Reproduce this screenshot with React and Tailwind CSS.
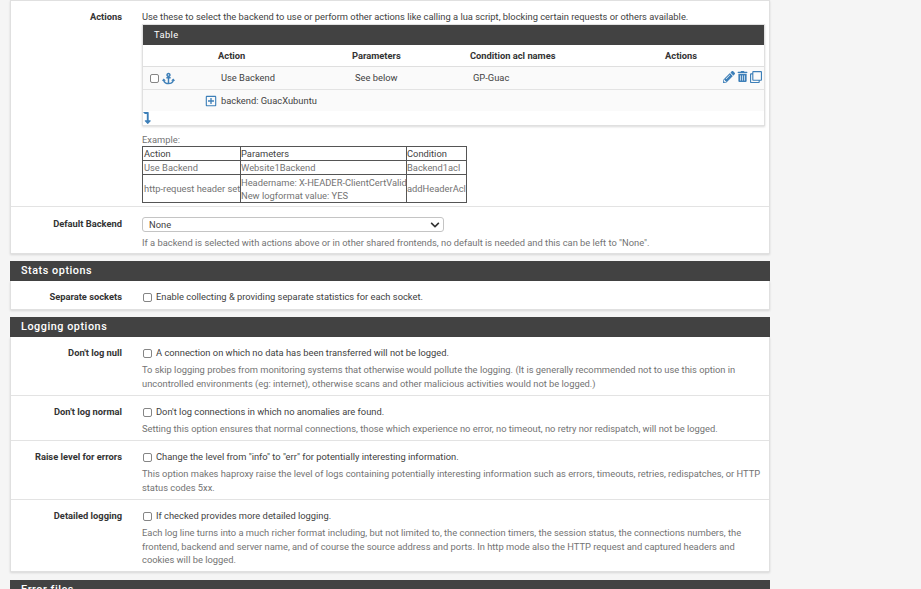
import { FaAnchor, FaPencilAlt, FaTrashAlt, FaRegClone, FaRegPlusSquare, FaLevelDownAlt, FaChevronDown } from "react-icons/fa";

const Check = () => (
  <span className="inline-block ml-[1px] w-[9px] h-[9px] shrink-0 bg-white border border-[#858585] rounded-[2px]" />
);

const SectionHead = ({ title }) => (
  <div className="h-[20px] bg-[#424242] text-white text-[10.8px] font-medium tracking-[0.55px] pl-[11px] pt-[3px] leading-[14px]">
    {title}
  </div>
);

const Row = ({ label, children, last, className = "" }) => (
  <div className={`flex ${last ? "" : "border-b border-[#e3e3e3]"} ${className}`}>
    <div className="w-[111px] shrink-0 text-right text-[9.33px] font-bold text-[#333] leading-[14px]">{label}</div>
    <div className="ml-[20px] w-[623px]">{children}</div>
  </div>
);

const CheckLine = ({ children }) => (
  <div className="flex items-center h-[14px] text-[9.33px] text-[#424242] leading-[14px]">
    <Check />
    <span className="ml-[4px]">{children}</span>
  </div>
);

const Help = ({ children, className = "mt-[3px]" }) => (
  <div className={`${className} text-[9.33px] text-[#737373] leading-[13.5px]`}>{children}</div>
);

const Card = ({ children, className = "" }) => (
  <div className={`bg-white border border-[#e0e0e0] shadow-[0_1px_2px_rgba(0,0,0,0.12)] ${className}`}>{children}</div>
);

const td = "border border-[#555] align-middle font-normal text-left";

export default function App() {
  return (
    <div className="h-[589px] overflow-hidden bg-[#f5f5f5] pl-[10px] font-['Roboto',sans-serif]">
      <div className="w-[760px]">
        <Card>
          <Row label="Actions" className="pt-[9px] h-[206px]">
            <div className="text-[9.33px] text-[#424242] leading-[13px]">
              Use these to select the backend to use or perform other actions like calling a lua script, blocking certain requests or others available.
            </div>
            <div className="mt-[1px] bg-white border border-[#e0e0e0] shadow-[0_1px_2px_rgba(0,0,0,0.15)]">
              <div className="h-[20px] bg-[#424242] text-white text-[9.33px] tracking-[0.4px] pl-[11px] leading-[20px]">Table</div>
              <div className="flex h-[22px] items-center text-[9.33px] font-bold text-[#333] border-b border-[#dfdfdf]">
                <span className="ml-[75px] w-[134px]">Action</span>
                <span className="w-[118px]">Parameters</span>
                <span className="w-[195px]">Condition acl names</span>
                <span>Actions</span>
              </div>
              <div className="flex h-[23px] items-center text-[9.33px] text-[#424242] bg-[#fafafa] border-b border-[#e3e3e3]">
                <span className="ml-[6px] flex items-center w-[72px]">
                  <Check />
                  <FaAnchor className="ml-[3px] text-[13px] text-[#3d7fb8]" />
                </span>
                <span className="w-[134px]">Use Backend</span>
                <span className="w-[118px]">See below</span>
                <span className="flex-1">GP-Guac</span>
                <span className="flex items-center gap-[2px] pr-[2px] -mt-[3px]">
                  <FaPencilAlt className="text-[12px] text-[#3d7fb8]" />
                  <FaTrashAlt className="text-[11px] text-[#3d7fb8]" />
                  <FaRegClone className="text-[12px] text-[#3d7fb8]" />
                </span>
              </div>
              <div className="flex h-[21px] items-center text-[9.33px] text-[#424242] bg-[#fafafa]">
                <FaRegPlusSquare className="ml-[62px] text-[12px] text-[#3d7fb8]" />
                <span className="ml-[4px]">backend: GuacXubuntu</span>
              </div>
              <div className="h-[14px] flex items-center">
                <FaLevelDownAlt className="-ml-[2px] text-[12px] text-[#3d7fb8]" />
              </div>
            </div>
            <div className="mt-[7px] text-[9.33px] text-[#737373] leading-[13px]">Example:</div>
            <table className="table-fixed w-[324px] border-collapse whitespace-nowrap text-[9.33px] text-[#737373] leading-[13px]">
              <tbody>
                <tr className="h-[14px]">
                  <td className={`${td} w-[98px] pl-[1px] font-bold text-[#424242]`}>Action</td>
                  <td className={`${td} w-[166px] font-bold text-[#424242]`}>Parameters</td>
                  <td className={`${td} w-[60px] font-bold text-[#424242]`}>Condition</td>
                </tr>
                <tr className="h-[14px]">
                  <td className={`${td} pl-[1px]`}>Use Backend</td>
                  <td className={td}>Website1Backend</td>
                  <td className={td}>Backend1acl</td>
                </tr>
                <tr className="h-[28px]">
                  <td className={`${td} pl-[1px]`}>http-request header set</td>
                  <td className={td}>
                    Headername: X-HEADER-ClientCertValid
                    <br />
                    New logformat value: YES
                  </td>
                  <td className={td}>addHeaderAcl</td>
                </tr>
              </tbody>
            </table>
          </Row>
          <Row label="Default Backend" last className="pt-[10px] h-[46px]">
            <div className="w-[302px] h-[15px] flex items-center justify-between bg-white border border-[#c4c4c4] rounded-[3px] pl-[6px] pr-[3px] text-[9.33px] text-[#424242]">
              <span>None</span>
              <FaChevronDown className="text-[10px] text-[#333]" />
            </div>
            <Help className="mt-[4px]">If a backend is selected with actions above or in other shared frontends, no default is needed and this can be left to "None".</Help>
          </Row>
        </Card>

        <div className="mt-[7px]">
          <SectionHead title="Stats options" />
          <Card className="border-t-0">
            <Row label="Separate sockets" last className="pt-[9px] h-[28px]">
              <CheckLine>Enable collecting &amp; providing separate statistics for each socket.</CheckLine>
            </Row>
          </Card>
        </div>

        <div className="mt-[7px]">
          <SectionHead title="Logging options" />
          <Card className="border-t-0">
            <Row label="Don't log null" className="pt-[9px] h-[59px]">
              <CheckLine>A connection on which no data has been transferred will not be logged.</CheckLine>
              <Help>
                To skip logging probes from monitoring systems that otherwise would pollute the logging. (It is generally recommended not to use this option in uncontrolled environments (eg: internet), otherwise scans and other malicious activities would not be logged.)
              </Help>
            </Row>
            <Row label="Don't log normal" className="pt-[9px] h-[45px]">
              <CheckLine>Don't log connections in which no anomalies are found.</CheckLine>
              <Help>Setting this option ensures that normal connections, those which experience no error, no timeout, no retry nor redispatch, will not be logged.</Help>
            </Row>
            <Row label="Raise level for errors" className="pt-[9px] h-[59px]">
              <CheckLine>Change the level from "info" to "err" for potentially interesting information.</CheckLine>
              <Help>This option makes haproxy raise the level of logs containing potentially interesting information such as errors, timeouts, retries, redispatches, or HTTP status codes 5xx.</Help>
            </Row>
            <Row label="Detailed logging" last className="pt-[9px] h-[71px]">
              <CheckLine>If checked provides more detailed logging.</CheckLine>
              <Help>Each log line turns into a much richer format including, but not limited to, the connection timers, the session status, the connections numbers, the frontend, backend and server name, and of course the source address and ports. In http mode also the HTTP request and captured headers and cookies will be logged.</Help>
            </Row>
          </Card>
        </div>

        <div className="mt-[8px]">
          <SectionHead title="Error files" />
        </div>
      </div>
    </div>
  );
}
